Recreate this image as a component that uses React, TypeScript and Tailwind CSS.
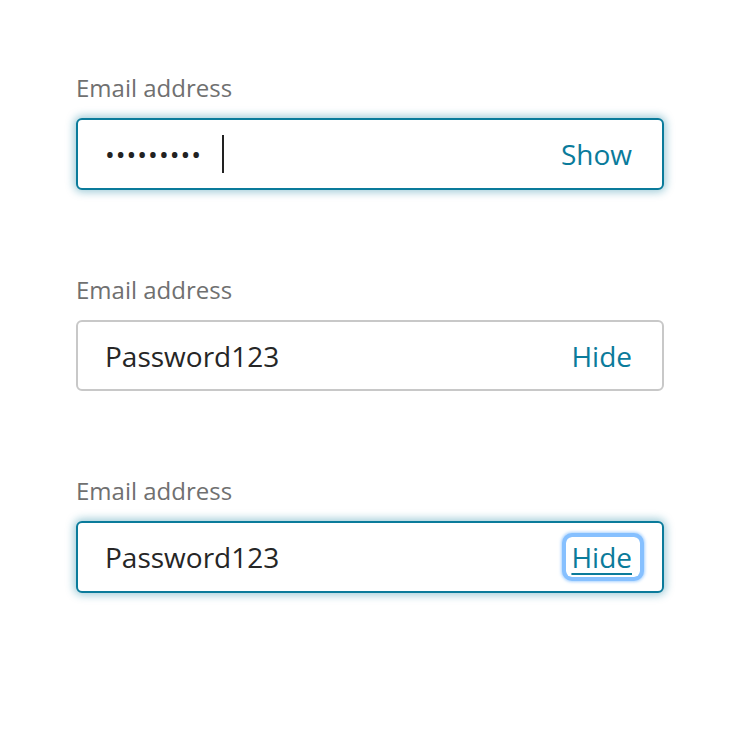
const font = { fontFamily: '"Open Sans", "Noto Sans", sans-serif' }

type FieldProps = {
  value: string
  action: string
  focused?: boolean
  masked?: boolean
  actionFocused?: boolean
}

const PasswordField = ({ value, action, focused, masked, actionFocused }: FieldProps) => {
  return (
    <div className="flex flex-col gap-[15px]">
      <label className="text-[24px] leading-[30px] text-[#707070]">Email address</label>
      <div
        className={
          focused
            ? 'flex h-[72px] items-center justify-between rounded-[6px] border-2 border-[#0a7b9b] bg-white pl-[27px] pr-[20px] shadow-[0_0_8px_2px_rgba(10,123,155,0.4)]'
            : 'flex h-[71px] items-center justify-between rounded-[6px] border-2 border-[#c8c8c8] bg-white pl-[27px] pr-[20px]'
        }
      >
        <div className="flex items-center">
          {masked ? (
            <span className="text-[26px] leading-none tracking-[1px] text-[#222]">•••••••••</span>
          ) : (
            <span className="text-[28px] text-[#262626]">{value}</span>
          )}
          {masked && <span className="ml-[20px] h-[38px] w-[2px] bg-[#222]" />}
        </div>
        {actionFocused ? (
          <span className="mr-[2px] rounded-[6px] py-[1px] pl-[5px] pr-[8px] text-[28px] leading-[38px] text-[#0a7b9b] underline decoration-2 underline-offset-[5px] shadow-[0_0_0_4px_#86c0ff,0_0_3px_5px_rgba(134,192,255,0.7)]">
            {action}
          </span>
        ) : (
          <span className="px-[10px] text-[28px] text-[#0a7b9b]">{action}</span>
        )}
      </div>
    </div>
  )
}

export default function App() {
  return (
    <div className="h-[734px] w-[740px] bg-white" style={font}>
      <div className="flex w-[664px] flex-col gap-[85px] pl-[76px] pt-[73px]">
        <PasswordField value="" action="Show" focused masked />
        <PasswordField value="Password123" action="Hide" />
        <PasswordField value="Password123" action="Hide" focused actionFocused />
      </div>
    </div>
  )
}
